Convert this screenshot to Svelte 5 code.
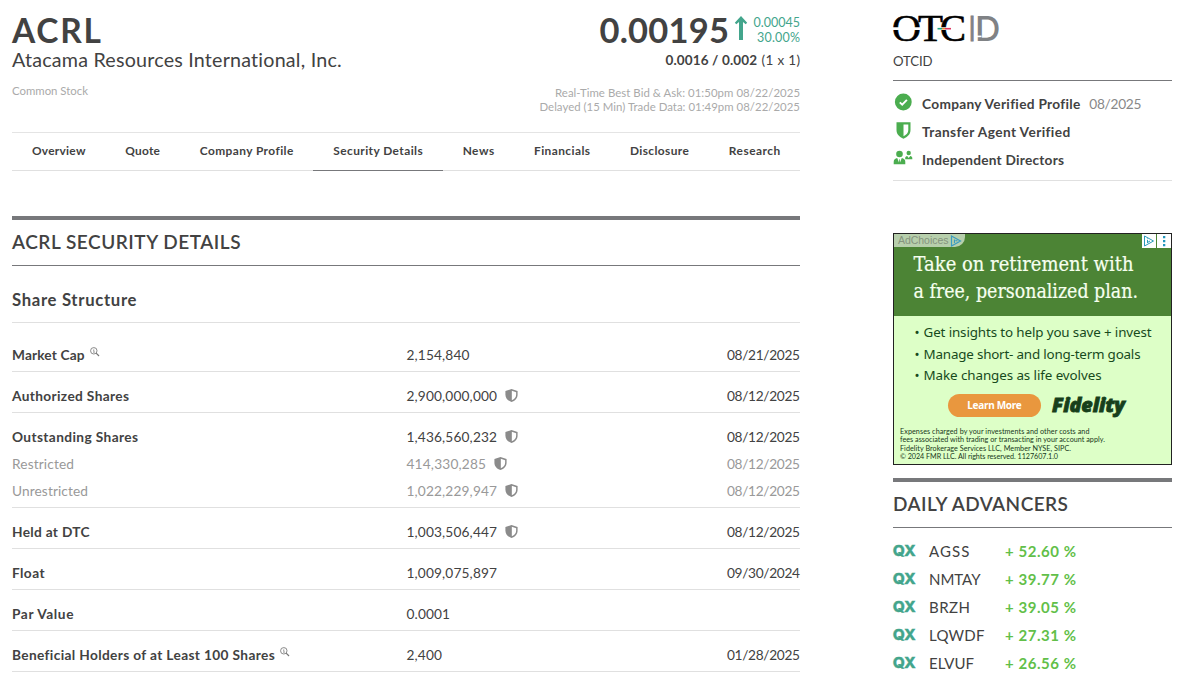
<script>
  // Spreads a label's letters so that it takes up the given width.
  function fit(node, width) {
    const apply = (target) => {
      node.style.letterSpacing = '0px';
      node.style.marginRight = '0px';
      const n = node.textContent.length - 1;
      const gap = (target - node.getBoundingClientRect().width) / n;
      node.style.letterSpacing = `${gap}px`;
      node.style.marginRight = `${-gap}px`;
    };
    apply(width);
    return { update: apply };
  }

  const tabs = [
    ['Overview', 53.5], ['Quote', 34.5], ['Company Profile', 93.5], ['Security Details', 89.5],
    ['News', 31.5], ['Financials', 56], ['Disclosure', 59], ['Research', 51.5],
  ];

  const rows = [
    [{ label: 'Market Cap', w: 72.5, value: '2,154,840', vw: 63, date: '08/21/2025', info: true }],
    [{ label: 'Authorized Shares', w: 117, value: '2,900,000,000', vw: 90.5, date: '08/12/2025', shield: true }],
    [
      { label: 'Outstanding Shares', w: 126, value: '1,436,560,232', vw: 90.5, date: '08/12/2025', shield: true },
      { label: 'Restricted', w: 62, value: '414,330,285', vw: 79.5, date: '08/12/2025', shield: true, sub: true },
      { label: 'Unrestricted', w: 76, value: '1,022,229,947', vw: 90.5, date: '08/12/2025', shield: true, sub: true },
    ],
    [{ label: 'Held at DTC', w: 77.5, value: '1,003,506,447', vw: 90.5, date: '08/12/2025', shield: true }],
    [{ label: 'Float', w: 32.5, value: '1,009,075,897', vw: 90.5, date: '09/30/2024' }],
    [{ label: 'Par Value', w: 61.5, value: '0.0001', vw: 43.5, date: '' }],
    [{ label: 'Beneficial Holders of at Least 100 Shares', w: 262.5, value: '2,400', vw: 35.5, date: '01/28/2025', info: true }],
  ];

  const advancers = [
    ['AGSS', 40.5, '+ 52.60 %'], ['NMTAY', 51.5, '+ 39.77 %'], ['BRZH', 41, '+ 39.05 %'],
    ['LQWDF', 55.5, '+ 27.31 %'], ['ELVUF', 45, '+ 26.56 %'],
  ];
</script>

{#snippet shield()}
  <svg class="shield" viewBox="0 0 16 16" width="13" height="13">
    <path fill="currentColor" fill-rule="evenodd" d="M8 0 15.500 2.600V7c0 4.300-3.200 7.500-7.500 9C3.700 14.500.5 11.300.5 7V2.600ZM8.400 2.300V13.700C11.700 12.400 13.700 9.900 13.700 7V4Z" />
  </svg>
{/snippet}

<div class="page">
  <main>
    <header>
      <div class="company">
        <h1><span use:fit={89}>ACRL</span></h1>
        <div class="name"><span use:fit={330}>Atacama Resources International, Inc.</span></div>
        <div class="kind"><span use:fit={76}>Common Stock</span></div>
      </div>
      <div class="quote">
        <div class="price">
          <b><span use:fit={129.500}>0.00195</span></b>
          <svg viewBox="0 0 12 24" width="12" height="24"><path fill="#43a58c" d="M6 0 12.200 6.800 10.700 8.300 8 6V24H4V6L1.300 8.300-.2 6.800Z" /></svg>
          <div class="change">
            <span use:fit={46.500}>0.00045</span>
            <span use:fit={43}>30.00%</span>
          </div>
        </div>
        <div class="bid"><b use:fit={91.500}>0.0016 / 0.002</b><span use:fit={38.500}>(1 x 1)</span></div>
        <div class="times">
          <span use:fit={245}>Real-Time Best Bid &amp; Ask: 01:50pm 08/22/2025</span>
          <span use:fit={260.500}>Delayed (15 Min) Trade Data: 01:49pm 08/22/2025</span>
        </div>
      </div>
    </header>

    <nav>
      {#each tabs as [tab, w]}
        <a class:active={tab === 'Security Details'}><span use:fit={w}>{tab}</span></a>
      {/each}
    </nav>

    <h2 class="details"><span use:fit={228.500}>ACRL SECURITY DETAILS</span></h2>
    <h3><span use:fit={124.500}>Share Structure</span></h3>

    {#each rows as group}
      <div class="group">
        {#each group as r}
          <div class="row" class:sub={r.sub}>
            <div class="cell label">
              <span use:fit={r.w}>{r.label}</span>
              {#if r.info}
                <svg class="info" viewBox="0 0 10 10" width="9.500" height="9.500" fill="none" stroke="#777" stroke-width="0.900">
                  <circle cx="4" cy="4" r="3.400" /><path d="M6.500 6.500 9.500 9.500" stroke-width="1.300" /><path d="M3.300 3.500H4.200V5.400M3.200 5.500H5M4 2v.7" stroke-width="0.700" />
                </svg>
              {/if}
            </div>
            <div class="cell">
              <span use:fit={r.vw}>{r.value}</span>
              {#if r.shield}{@render shield()}{/if}
            </div>
            <div class="cell date">{#if r.date}<span use:fit={73}>{r.date}</span>{/if}</div>
          </div>
        {/each}
      </div>
    {/each}
  </main>

  <aside>
    <div class="market">
      <svg width="107" height="28" viewBox="0 0 107 28">
        <g font-family="Liberation Serif" font-size="37.500" fill="#000" stroke="#000" stroke-width=".6">
          <text x="-1" y="26" textLength="29" lengthAdjust="spacingAndGlyphs">O</text>
          <text x="25" y="26" textLength="25" lengthAdjust="spacingAndGlyphs">T</text>
          <text x="47" y="26" textLength="26" lengthAdjust="spacingAndGlyphs">C</text>
        </g>
        <path d="M-1 13.700H27.500M43.500 13.700H60" stroke="#fff" stroke-width="2.800" />
        <path d="M44.500 13.700H49" stroke="#1ca687" stroke-width="1.600" />
        <path d="M49 13.700H52" stroke="#e88b2e" stroke-width="1.600" />
        <path d="M52 13.700H58" stroke="#dc3560" stroke-width="1.600" />
        <g font-family="Inter" font-size="34.500" font-weight="500" fill="#808285">
          <text x="76.300" y="26.300" textLength="5.700" lengthAdjust="spacingAndGlyphs" stroke="#808285" stroke-width="1">I</text>
          <text x="82" y="26.300" textLength="25.500" lengthAdjust="spacingAndGlyphs">D</text>
        </g>
        <path d="M83 21.400H88.500" stroke="#fff" stroke-width="1.600" />
      </svg>
      <div class="tier"><span use:fit={39.500}>OTCID</span></div>
    </div>

    <ul class="badges">
      <li>
        <svg viewBox="0 0 18 18" width="18" height="18"><circle cx="9.300" cy="8" r="8.400" fill="#4bad4f" /><path d="M5.800 8.400 8.200 10.700 12.900 5.800" fill="none" stroke="#fff" stroke-width="1.900" /></svg>
        <b use:fit={158}>Company Verified Profile</b><em use:fit={52}>08/2025</em>
      </li>
      <li>
        <svg viewBox="0 0 18 18" width="18" height="18"><path fill="#4bad4f" fill-rule="evenodd" d="M2.500.3H16.500V8.100C16.500 12.400 13.600 15 9.500 16.700 5.400 15 2.500 12.400 2.500 8.100ZM9.500 2.500V14.300C12.400 12.800 14.300 11 14.300 8.100V2.500Z" /></svg>
        <b use:fit={148}>Transfer Agent Verified</b>
      </li>
      <li>
        <svg viewBox="0 0 18 18" width="18" height="18" fill="#4bad4f">
          <circle cx="5.500" cy="4" r="3.300" /><circle cx="14.700" cy="3" r="2.200" />
          <path d="M-.3 14.200V11.800C-.3 9.700 1.200 8.500 3.200 8.100L5 12.500 5.200 9.200H5.800L6 12.500 7.800 8.100C9.800 8.500 11.300 9.700 11.300 11.800V14.200ZM11.200 9.300V8.300C11.200 7 12 6.300 13.200 6.100L14.700 8 16.200 6.100C17.500 6.300 18.300 7 18.300 8.300V9.300Z" />
        </svg>
        <b use:fit={142}>Independent Directors</b>
      </li>
    </ul>

    <div class="ad">
      <div class="adchoices"><span use:fit={50.500}>AdChoices</span>
        <svg width="12" height="12" viewBox="0 0 12 12" fill="none" stroke="#3a9cc0" stroke-width="1.200"><path d="M1.500 1 10.500 6 1.500 11ZM4.500 4.500V8M5.500 5.500 7.500 6" /></svg>
      </div>
      <div class="controls">
        <svg width="14" height="14" viewBox="0 0 14 14" fill="none" stroke="#2c9bbb"><path d="M2.500 2 11.500 7 2.500 12ZM5.500 6V9M5.500 4.500V5.200M5.500 8.500 8 7" /></svg>
        <svg width="14" height="14" viewBox="0 0 14 14" fill="#2196bd"><path d="M6 2h2.300v2.300H6ZM6 6h2.300v2.300H6ZM6 10h2.300v2.300H6Z" /></svg>
      </div>
      <div class="pitch">
        <svg width="277" height="82" viewBox="0 0 277 82" font-family="DejaVu Serif" font-size="20.500" fill="#f6ffef" stroke="#f6ffef" stroke-width=".2">
          <text x="19.500" y="37" textLength="220" lengthAdjust="spacingAndGlyphs">Take on retirement with</text>
          <text x="19.500" y="64" textLength="224.500" lengthAdjust="spacingAndGlyphs">a free, personalized plan.</text>
        </svg>
      </div>
      <ul class="points">
        <li>• <span use:fit={228}>Get insights to help you save + invest</span></li>
        <li>• <span use:fit={217}>Manage short- and long-term goals</span></li>
        <li>• <span use:fit={178}>Make changes as life evolves</span></li>
      </ul>
      <div class="cta">
        <button><span use:fit={54.500}>Learn More</span></button>
        <svg width="76" height="22" viewBox="0 0 76 22">
          <text x="0" y="16.500" font-family="Open Sans" font-weight="800" font-style="italic" font-size="18.500" fill="#173f1b" stroke="#173f1b" stroke-width=".8" textLength="73" lengthAdjust="spacingAndGlyphs">Fidelity</text>
        </svg>
      </div>
      <div class="legal">
        <span use:fit={189.500}>Expenses charged by your investments and other costs and</span>
        <span use:fit={205}>fees associated with trading or transacting in your account apply.</span>
        <span use:fit={171}>Fidelity Brokerage Services LLC, Member NYSE, SIPC.</span>
        <span use:fit={158}>© 2024 FMR LLC. All rights reserved. 1127607.1.0</span>
      </div>
    </div>

    <h2><span use:fit={175}>DAILY ADVANCERS</span></h2>
    <div class="list">
      {#each advancers as [sym, w, pct]}
        <div class="adv">
          <svg width="23" height="14" viewBox="0 0 23 14"><text x="-.3" y="12.300" font-family="Inter" font-weight="800" font-size="15" fill="#43a58c" stroke="#43a58c" stroke-width=".3" textLength="23" lengthAdjust="spacingAndGlyphs">QX</text></svg>
          <div class="sym"><span use:fit={w}>{sym}</span></div>
          <b use:fit={71}>{pct}</b>
        </div>
      {/each}
    </div>
  </aside>
</div>

<style>
  :global(body) { margin: 0; overflow: hidden; background: #fff; }
  .page {
    box-sizing: border-box; width: 1200px; height: 675px; overflow: hidden;
    padding-left: 12px; display: flex; gap: 93px;
    font-family: Lato, "Noto Sans", sans-serif; font-size: 13.7px; color: #424242;
  }
  .page :is(span, b, em) { display: inline-block; white-space: pre; }
  h1, h2, h3, ul { margin: 0; padding: 0; }
  ul { list-style: none; }
  svg { display: block; flex: none; overflow: visible; }
  main { width: 788px; flex: none; }
  aside { width: 279px; flex: none; }

  header { display: flex; justify-content: space-between; height: 132px; }
  h1 { font-size: 33.5px; line-height: 34px; padding-top: 13px; }
  .name { font-size: 19.7px; line-height: 26px; }
  .kind { font-size: 11.4px; line-height: 14px; margin-top: 11px; color: #aaa; }
  .quote { display: flex; flex-direction: column; align-items: flex-end; padding-top: 13px; }
  .price { display: flex; height: 34px; }
  .price b { font-size: 34.5px; line-height: 34px; margin-right: 6px; }
  .price svg { margin-top: 3px; }
  .change { display: flex; flex-direction: column; align-items: flex-end; margin: 1.5px 0 0 6.5px; font-size: 12.5px; line-height: 15px; color: #43a58c; }
  .bid { display: flex; gap: 4.5px; line-height: 20px; margin-top: 3px; font-size: 13.5px; }
  .times { display: flex; flex-direction: column; align-items: flex-end; margin-top: 16px; font-size: 11.4px; line-height: 14px; color: #aaa; }

  nav { display: flex; height: 37px; border-top: 1px solid #e4e4e4; border-bottom: 1px solid #e0e0e0; }
  nav a { padding: 0 19.95px; height: 37px; line-height: 36px; font-size: 11.9px; font-weight: 700; }
  nav a.active { border-bottom: 1px solid #77787b; }

  h2 { box-sizing: border-box; height: 50px; border-top: 4px solid #77787b; border-bottom: 1px solid #77787b; font-size: 19px; font-weight: 600; line-height: 44px; }
  h2.details { margin-top: 45px; }
  h3 { height: 56px; border-bottom: 1px solid #e0e0e0; font-size: 16.7px; font-weight: 700; line-height: 69px; }

  .group { padding: 10px 0 3px; border-bottom: 1px solid #e0e0e0; }
  h3 + .group { padding-top: 18px; }
  .row { display: grid; grid-template-columns: 394.5px 1fr auto; height: 27px; line-height: 27px; }
  .cell { display: flex; align-items: center; }
  .label { font-weight: 700; }
  .sub { color: #999; }
  .sub .label { font-weight: 400; }
  .shield { margin-left: 7.5px; color: #8b8b8b; }
  .info { margin: -6px 0 0 5.5px; }

  .market { height: 80px; border-bottom: 1px solid #77787b; }
  .market svg { padding-top: 15px; }
  .tier { line-height: 20px; margin-top: 8px; font-size: 13.2px; }
  .badges { height: 91px; padding-top: 8px; border-bottom: 1px solid #e0e0e0; }
  .badges li { display: flex; align-items: center; height: 28.2px; }
  .badges li svg { margin: 0 10px 0 1px; }
  .badges em { font-style: normal; margin-left: 9px; color: #888; }

  .ad { position: relative; box-sizing: border-box; height: 232px; margin: 52px 0 13px; border: 1px solid #222; background: #ddffc7; color: #174a1c; font-family: "Noto Sans", sans-serif; }
  .pitch { height: 82px; background: #4c8435; }
  .adchoices { position: absolute; left: 0; top: 0; display: flex; align-items: center; width: 67px; height: 13px; padding-left: 4px; gap: 1px; border-bottom-right-radius: 10px; background: #b7cfac; color: #85947e; font: 10.5px/13px "Liberation Sans", sans-serif; }
  .controls { position: absolute; right: 0; top: 0; display: flex; gap: 1px; }
  .controls svg { background: #fff; }
  .points { padding: 6px 0 0 20.5px; font-size: 13.4px; }
  .points li { display: flex; gap: 4px; line-height: 21.5px; }
  .cta { display: flex; align-items: center; height: 23px; margin-top: 7.5px; padding-left: 54px; }
  .cta button { width: 93px; height: 23px; padding: 0; border: 0; border-radius: 12px; background: #e9973e; color: #fff; font: 700 10px/23px "Noto Sans", sans-serif; }
  .cta svg { margin-left: 11px; }
  .legal { display: flex; flex-direction: column; align-items: flex-start; padding: 10.5px 0 0 6px; font-family: Lato, sans-serif; font-size: 7.2px; line-height: 8.5px; color: #17381b; }

  .list { padding-top: 8.5px; }
  .adv { display: flex; align-items: center; height: 28.2px; font-size: 15px; }
  .sym { width: 76px; margin-left: 13px; }
  .adv b { color: #62bf49; font-weight: 700; }
</style>
